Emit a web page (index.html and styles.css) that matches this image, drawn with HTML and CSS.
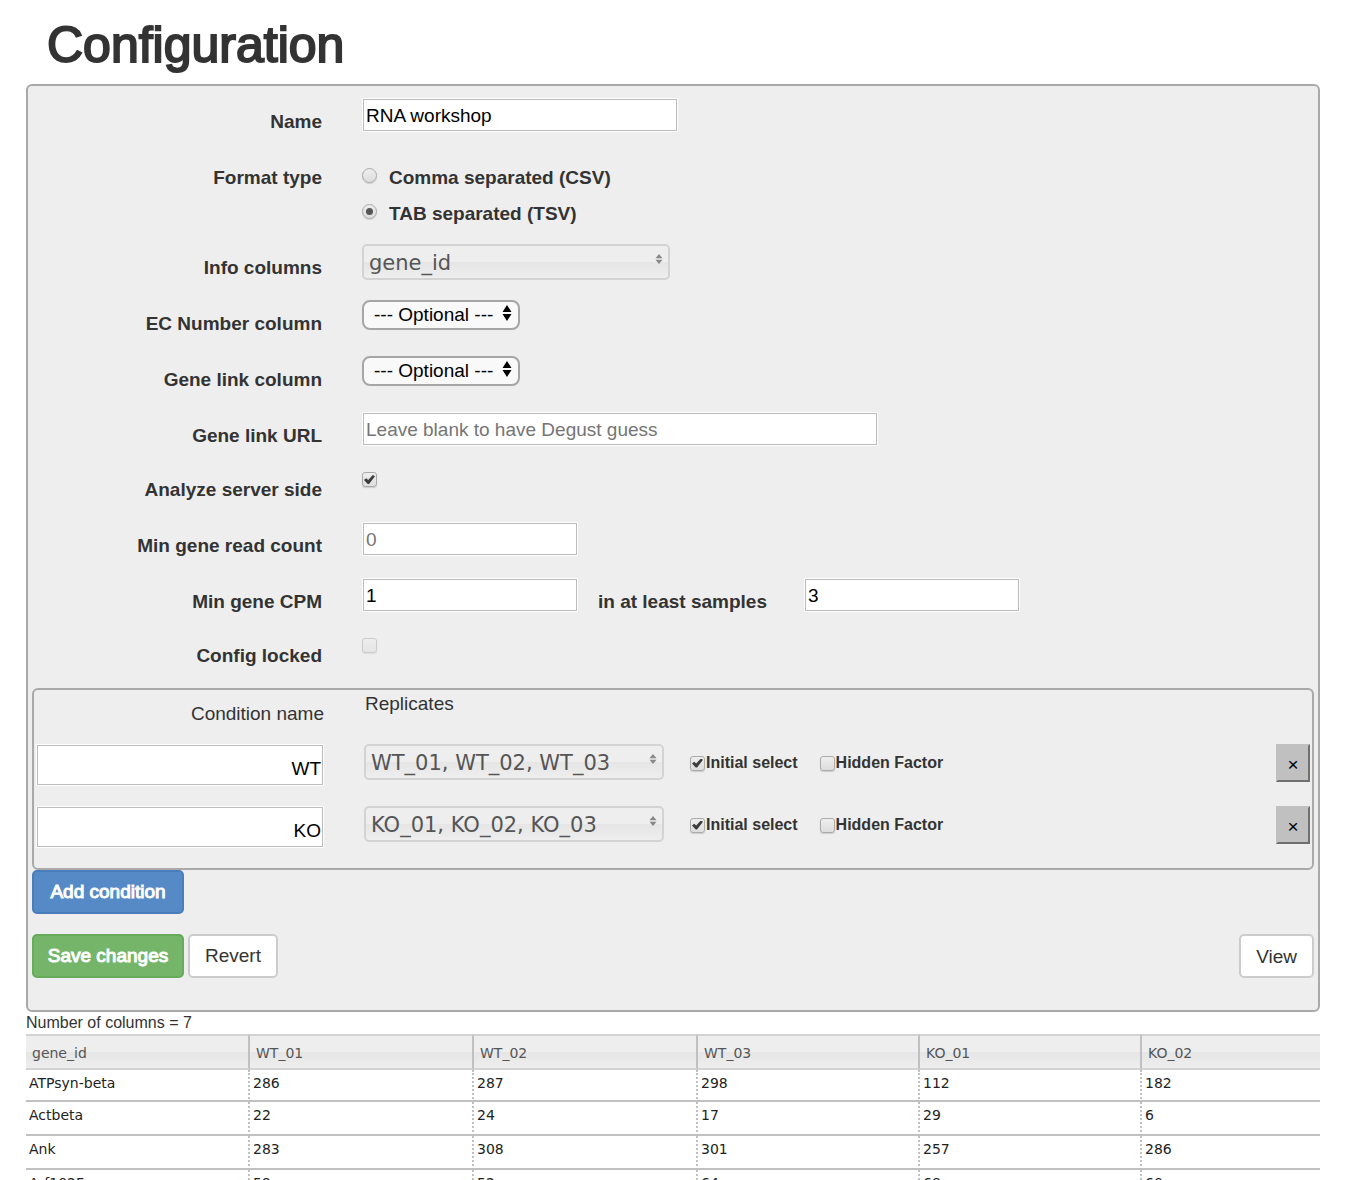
FILE: index.html
```html
<!DOCTYPE html>
<html lang="en">
<head>
<meta charset="utf-8">
<title>Configuration</title>
<link rel="stylesheet" href="styles.css">
</head>
<body>
<svg class="sprite" aria-hidden="true">
  <symbol id="updown" viewBox="0 0 10 16"><path d="M5 0 9.500 7H.5zM.5 9h9L5 16z"/></symbol>
  <symbol id="updown-soft" viewBox="0 0 8 10"><path d="M4 0 7.500 4.300H.5zM.5 5.700h7L4 10z"/></symbol>
</svg>
<main class="page">
  <h1 class="title">Configuration</h1>
  <form class="panel">
    <div class="row">
      <label class="row-label" for="name">Name</label>
      <input class="field field-medium" id="name" type="text" value="RNA workshop">
    </div>
    <div class="row row-format" role="radiogroup" aria-labelledby="format">
      <span class="row-label" id="format">Format type</span>
      <div class="radios">
        <label class="radio-line"><input class="radio" type="radio" name="format">Comma separated (CSV)</label>
        <label class="radio-line"><input class="radio" type="radio" name="format" checked>TAB separated (TSV)</label>
      </div>
    </div>
    <div class="row">
      <label class="row-label" for="info">Info columns</label>
      <span class="multi multi-wide"><select id="info"><option>gene_id</option></select><svg><use href="#updown-soft"/></svg></span>
    </div>
    <div class="row">
      <label class="row-label" for="ec">EC Number column</label>
      <span class="choice"><select id="ec"><option>--- Optional ---</option></select><svg><use href="#updown"/></svg></span>
    </div>
    <div class="row">
      <label class="row-label" for="link">Gene link column</label>
      <span class="choice"><select id="link"><option>--- Optional ---</option></select><svg><use href="#updown"/></svg></span>
    </div>
    <div class="row row-tight">
      <label class="row-label" for="url">Gene link URL</label>
      <input class="field field-long" id="url" type="text" placeholder="Leave blank to have Degust guess">
    </div>
    <div class="row">
      <label class="row-label" for="analyze">Analyze server side</label>
      <input class="check row-check" id="analyze" type="checkbox" checked>
    </div>
    <div class="row">
      <label class="row-label" for="count">Min gene read count</label>
      <input class="field field-short" id="count" type="text" placeholder="0">
    </div>
    <div class="row row-tight">
      <label class="row-label" for="cpm">Min gene CPM</label>
      <div class="pair">
        <input class="field field-short" id="cpm" type="text" value="1">
        <label class="row-label pair-label" for="samples">in at least samples</label>
        <input class="field field-short" id="samples" type="text" value="3">
      </div>
    </div>
    <div class="row">
      <label class="row-label" for="locked">Config locked</label>
      <input class="check row-check" id="locked" type="checkbox" disabled>
    </div>

    <section class="conditions">
      <div class="condition-head">
        <span class="condition-name" id="cond-name">Condition name</span>
        <span id="replicates">Replicates</span>
      </div>
      <div class="condition">
        <input class="field field-condition" type="text" value="WT" aria-labelledby="cond-name">
        <span class="multi"><select aria-labelledby="replicates"><option>WT_01, WT_02, WT_03</option></select><svg><use href="#updown-soft"/></svg></span>
        <div class="flags">
          <label class="flag"><input class="check" type="checkbox" checked>Initial select</label>
          <label class="flag"><input class="check" type="checkbox">Hidden Factor</label>
        </div>
        <button class="remove" type="button">×</button>
      </div>
      <div class="condition">
        <input class="field field-condition" type="text" value="KO" aria-labelledby="cond-name">
        <span class="multi"><select aria-labelledby="replicates"><option>KO_01, KO_02, KO_03</option></select><svg><use href="#updown-soft"/></svg></span>
        <div class="flags">
          <label class="flag"><input class="check" type="checkbox" checked>Initial select</label>
          <label class="flag"><input class="check" type="checkbox">Hidden Factor</label>
        </div>
        <button class="remove" type="button">×</button>
      </div>
    </section>
    <button class="btn btn-primary" type="button">Add condition</button>
    <div class="actions">
      <button class="btn btn-success" type="submit">Save changes</button>
      <button class="btn" type="reset">Revert</button>
      <button class="btn btn-view" type="button">View</button>
    </div>
  </form>
  <p class="summary">Number of columns = 7</p>
  <div class="viewport">
    <table class="grid">
      <colgroup><col class="col-a"><col class="col-a"><col class="col-a"><col class="col-b"><col class="col-b"><col></colgroup>
      <thead>
        <tr><th>gene_id</th><th>WT_01</th><th>WT_02</th><th>WT_03</th><th>KO_01</th><th>KO_02</th></tr>
      </thead>
      <tbody>
        <tr><td>ATPsyn-beta</td><td>286</td><td>287</td><td>298</td><td>112</td><td>182</td></tr>
        <tr><td>Actbeta</td><td>22</td><td>24</td><td>17</td><td>29</td><td>6</td></tr>
        <tr><td>Ank</td><td>283</td><td>308</td><td>301</td><td>257</td><td>286</td></tr>
        <tr><td>Arf102F</td><td>59</td><td>52</td><td>64</td><td>68</td><td>60</td></tr>
      </tbody>
    </table>
  </div>
</main>
</body>
</html>
```
FILE: styles.css
```css
*, *::before, *::after { box-sizing: border-box; }

body {
  margin: 0;
  background: #fff;
  color: #333;
  font: 19px/24px "Liberation Sans", Arial, sans-serif;
}

input, select, button { margin: 0; font: inherit; color: #000; }

.sprite { display: none; }

.page {
  display: flex;
  flex-direction: column;
  height: 100vh;
  padding: 15px 32px 0 26px;
  overflow: hidden;
}

.title {
  margin: 0 0 9px 21px;
  font-size: 50px;
  font-weight: 400;
  line-height: 60px;
  -webkit-text-stroke: 2px #333;
}

.panel {
  flex: none;
  padding: 12px 4px 32px;
  border: 2px solid #a9a9a9;
  border-radius: 6px;
  background: #eee;
}

.row {
  display: grid;
  grid-template-columns: 290px minmax(0, 1fr);
  column-gap: 40px;
  align-items: start;
  justify-items: start;
  min-height: 56px;
}
.row-tight { min-height: 54px; }
.row-format { min-height: 90px; }

.row-label {
  justify-self: end;
  padding-top: 12px;
  font-weight: 700;
}

.field {
  height: 34px;
  max-width: 100%;
  padding: 2px 3px 0;
  border: 1px solid #fff;
  border-radius: 0;
  background: #fff;
  box-shadow: inset 0 0 0 1px #bbb;
}
.field::placeholder { color: #757575; }
.field-short { width: 216px; }
.field-medium { width: 316px; }
.field-long { width: 516px; }

.pair { display: flex; gap: 20px; }
.pair-label { width: 186px; }

.radios { padding-top: 6px; }
.radio-line {
  display: flex;
  gap: 12px;
  height: 36px;
  padding-top: 6px;
  font-weight: 700;
}

.radio, .check {
  flex: none;
  display: grid;
  place-items: center;
  width: 15px;
  height: 15px;
  appearance: none;
  border: 1px solid #aaa;
  background: linear-gradient(#eee, #ddd);
  box-shadow: 0 1px 1px #ccc;
}
.radio { margin-top: 2px; border-radius: 50%; }
.radio:checked::before {
  content: "";
  width: 7px;
  height: 7px;
  border-radius: 50%;
  background: #555;
}
.check { border-radius: 3px; }
.check:checked::before {
  content: "";
  width: 11px;
  height: 9px;
  background: #3c3c3c;
  clip-path: polygon(0 55%, 20% 36%, 38% 56%, 80% 0, 100% 14%, 46% 100%, 34% 100%);
}
.check:disabled { opacity: .5; }
.row-check { margin-top: 6px; }

/* select and its arrow share one grid cell */
.multi, .choice { display: grid; align-items: center; }
.multi > *, .choice > * { grid-area: 1 / 1; }
.multi select, .choice select { width: 100%; appearance: none; }
.multi svg, .choice svg { justify-self: end; pointer-events: none; }

.multi { width: 300px; }
.multi-wide { width: 308px; }
.multi select {
  height: 36px;
  padding: 1px 5px 0;
  border: 2px solid #d3d3d3;
  border-radius: 5px;
  background: linear-gradient(#eee 50%, #e5e5e5 50%, #eee);
  color: #555;
  font: 21px/32px "DejaVu Sans", Verdana, sans-serif;
}
.multi svg { width: 8px; height: 10px; margin: 0 7px 7px 0; fill: #888; }

.choice { width: 158px; }
.choice select {
  height: 30px;
  padding: 0 10px;
  border: 2px solid #a6a6a6;
  border-radius: 8px;
  background: #f9f9f9;
}
.choice svg { width: 10px; height: 16px; margin: 0 8px 4px 0; }

.conditions {
  border: 2px solid #a9a9a9;
  border-radius: 6px;
}
.condition-head, .condition {
  display: grid;
  grid-template-columns: 288px 300px minmax(0, 1fr) auto;
  padding: 0 2px;
}
.condition-head { height: 54px; column-gap: 41px; padding-top: 2px; }
.condition-name { padding-top: 10px; text-align: right; }
.condition { height: 62px; align-items: start; column-gap: 40px; }
.field-condition { width: 100%; height: 42px; padding: 9px 2px 1px; text-align: right; }

.flags { display: flex; flex-wrap: wrap; gap: 22px; padding: 7px 0 0; margin-left: -14px; }
.flag { display: flex; align-items: center; gap: 1px; font-size: 16px; font-weight: 700; }

.remove {
  width: 34px;
  height: 38px;
  padding: 4px 0 0;
  border: 2px solid;
  border-color: #c0c0c0 #6f6f6f #6f6f6f #c0c0c0;
  background: #c0c0c0;
}

.btn {
  height: 44px;
  padding: 0 15px;
  border: 2px solid #ccc;
  border-radius: 5px;
  background: #fff;
  color: #333;
}
.btn-primary, .btn-success { min-width: 152px; padding: 0; color: #fff; -webkit-text-stroke: 1px #fff; }
.btn-primary { display: block; border-color: #4a7ebb; background: #568ac6; }
.btn-success { border-color: #66ac5b; background: #75b56a; }
.btn-view { margin-left: auto; padding: 2px 15px 0; }
.actions { display: flex; gap: 4px; margin-top: 20px; }

.summary { flex: none; margin: 0; font-size: 16px; line-height: 22px; }

.viewport { flex: 1; min-height: 0; overflow: hidden; }
.grid {
  width: 100%;
  table-layout: fixed;
  border-collapse: separate;
  border-spacing: 0;
  font: 14px/18px "DejaVu Sans", Verdana, sans-serif;
}
.col-a { width: 224px; }
.col-b { width: 222px; }
.grid th {
  height: 36px;
  padding: 1px 6px 0;
  border: solid #d3d3d3;
  border-width: 2px 0;
  background: linear-gradient(#eee 50%, #e5e5e5 50%, #eee);
  color: #555;
  font-weight: 400;
  text-align: left;
}
.grid th:not(:last-child) { border-right: 2px solid silver; }
.grid td {
  height: 34px;
  padding: 4px 3px;
  border-bottom: 2px solid silver;
  color: #222;
  vertical-align: top;
}
.grid td:not(:last-child) { border-right: 2px dotted silver; }
.grid tbody tr:first-child td { height: 32px; }
```
